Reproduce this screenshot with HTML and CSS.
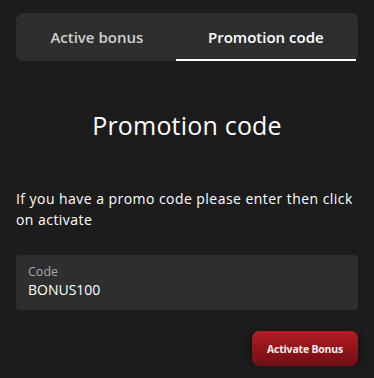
FILE: index.html
```html
<!DOCTYPE html>
<html lang="en">
<head>
  <meta charset="UTF-8">
  <meta name="viewport" content="width=device-width, initial-scale=1.0">
  <title>Promotion code</title>
  <link rel="stylesheet" href="styles.css">
</head>
<body>
  <div class="wrap">
    <div class="tabs">
      <button class="tab">Active bonus</button>
      <button class="tab active">Promotion code</button>
    </div>

    <h2 class="title">Promotion code</h2>

    <p class="info">If you have a promo code please enter then click on activate</p>

    <label class="field">
      <span class="field-label">Code</span>
      <input type="text" value="BONUS100">
    </label>

    <div class="actions">
      <button class="activate">Activate Bonus</button>
    </div>
  </div>
</body>
</html>
```

FILE: styles.css
```css
:root {
  --bg: #1c1c1c;
  --panel: #2e2e2e;
  --text: #fff;
  --muted: #cfcfcf;
}
* { box-sizing: border-box; margin: 0; padding: 0; }
html, body {
  background: var(--bg);
  color: var(--text);
  font-family: "Open Sans", "Noto Sans", sans-serif;
}
.wrap { padding: 13px 16px 0; }
/* Tabs */
.tabs {
  display: flex;
  background: var(--panel);
  border-radius: 7px;
  height: 48px;
  padding: 0 2px;
}
.tab {
  flex: 1 1 auto;
  background: none; border: none;
  font-family: inherit;
  font-size: 15px; font-weight: 600;
  color: var(--muted);
  border-bottom: 2px solid transparent;
  padding-top: 1px;
  cursor: pointer;
}
.tab.active { color: var(--text); border-bottom-color: #fff; }
/* Heading */
.title {
  text-align: center;
  font-size: 25px; font-weight: 400;
  margin-top: 48px;
  line-height: 32px;
  letter-spacing: 0.2px;
}
.info {
  margin-top: 47px;
  font-size: 14px;
  line-height: 21px;
  letter-spacing: 0.45px;
}
/* Input */
.field {
  display: flex; flex-direction: column;
  background: var(--panel);
  border-radius: 4px;
  margin-top: 25px;
  height: 55px;
  padding: 8px 12px 0;
}
.field-label { font-size: 12.5px; color: #a8a8a8; line-height: 17px; }
.field input {
  background: none; border: none; outline: none;
  color: var(--text);
  font-family: inherit; font-size: 14px; font-weight: 500;
  line-height: 20px;
}
.actions { display: flex; justify-content: flex-end; margin-top: 21px; }
.activate {
  width: 106px; height: 35px;
  border: none; border-radius: 7px;
  background: linear-gradient(#b51b23, #6d0f13);
  color: #fbeef0;
  font-family: inherit; font-size: 10.5px; font-weight: 700;
  letter-spacing: -0.2px;
  box-shadow: 0 2px 6px rgba(0,0,0,0.5);
  cursor: pointer;
}
```
